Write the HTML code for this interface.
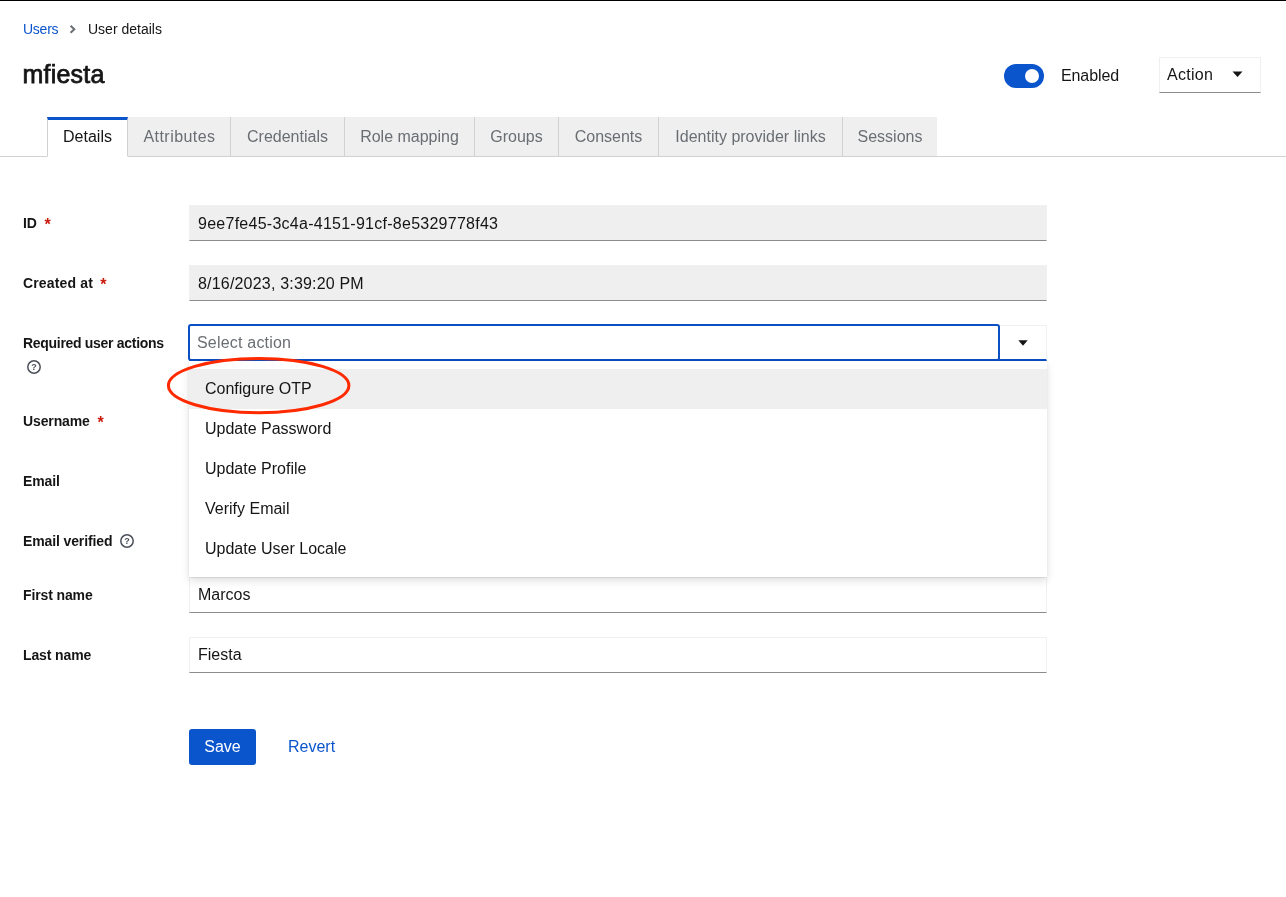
<!DOCTYPE html>
<html lang="en">
<head>
<meta charset="utf-8">
<title>User details</title>
<style>
*{box-sizing:border-box;margin:0;padding:0}
html,body{width:1286px;height:897px;background:#fff;overflow:hidden}
body{font-family:"Liberation Sans",sans-serif;font-size:16px;color:#151515;position:relative}
.abs{position:absolute;white-space:nowrap}
.topline{left:0;top:0;width:1286px;height:1px;background:#000}
.bc{top:21px;font-size:14px;line-height:16px}
.bc a{color:#0b55cc;text-decoration:none}
h1{position:absolute;left:22.4px;top:59px;font-size:25px;line-height:31px;font-weight:normal;-webkit-text-stroke:0.75px #151515;letter-spacing:0.25px;white-space:nowrap}
.tabsline{left:0;top:156px;width:1286px;height:1px;background:#d2d2d2}
.tabs{left:47px;top:117px;height:40px;display:flex}
.tab{height:40px;background:#efefef;border-right:1px solid #d2d2d2;border-bottom:1px solid #d2d2d2;color:#6a6e73;line-height:39px;text-align:center;font-size:16px}
.tab.first{background:#fff;color:#151515;border-top:3px solid #0b55cc;border-left:1px solid #d2d2d2;border-bottom:1px solid #fff;line-height:33px}
.tab.last{border-right:none}
.lbl{left:23px;font-size:14px;font-weight:bold;line-height:21px;letter-spacing:-0.12px}
.req{color:#c9190b;margin-left:7.7px;font-weight:bold;font-size:16px;line-height:0;position:relative;top:2px}
.inp{left:189px;width:858px;height:36px;border:1px solid #f0f0f0;border-bottom:1px solid #8a8d90;background:#fff;font-size:16px;line-height:34px;padding-left:8px}
.inp.ro{background:#efefef;padding-top:1px}
.menu{left:189px;top:361px;width:858px;height:216px;background:#fff;box-shadow:0 4px 8px 0 rgba(3,3,3,.12),0 0 4px 0 rgba(3,3,3,.06);padding-top:8px}
.mi{height:40px;line-height:40px;padding-left:16px;font-size:16px}
.mi.hl{background:#efefef}
.help{width:14px;height:14px}
</style>
</head>
<body>
<div id="root" style="position:absolute;left:0;top:0;width:1286px;height:897px;will-change:transform">
<div class="abs topline"></div>
<div class="abs bc" style="left:23px"><a style="letter-spacing:-0.25px">Users</a></div>
<svg class="abs" style="left:68px;top:24px" width="9" height="11" viewBox="0 0 9 11"><path d="M2.6 1.8 L6.3 5.3 L2.6 8.8" fill="none" stroke="#6a6e73" stroke-width="2"/></svg>
<div class="abs bc" style="left:88px">User details</div>
<h1>mfiesta</h1>

<div class="abs" style="left:1004px;top:64px;width:40px;height:24px;border-radius:12px;background:#0b55cc"></div>
<div class="abs" style="left:1024.7px;top:68.7px;width:14.5px;height:14.5px;border-radius:50%;background:#fff"></div>
<div class="abs" style="left:1061px;top:64px;line-height:24px;font-size:16px;letter-spacing:-0.1px">Enabled</div>
<div class="abs" style="left:1159px;top:57px;width:102px;height:36px;border:1px solid #f0f0f0;border-bottom:1px solid #8a8d90;padding-left:7px;line-height:34px;letter-spacing:0.3px;font-size:16px">Action</div>
<svg class="abs" style="left:1231.7px;top:71.4px" width="11" height="7" viewBox="0 0 11 7"><path d="M0.5 0.5 H10.5 L5.5 6 Z" fill="#151515"/></svg>

<div class="abs tabsline"></div>
<div class="abs tabs">
<div class="tab first" style="width:81px">Details</div>
<div class="tab" style="width:103px;letter-spacing:0.45px;padding-left:1px">Attributes</div>
<div class="tab" style="width:114px">Credentials</div>
<div class="tab" style="width:130px">Role mapping</div>
<div class="tab" style="width:84px">Groups</div>
<div class="tab" style="width:100px">Consents</div>
<div class="tab" style="width:184px">Identity provider links</div>
<div class="tab last" style="width:94px">Sessions</div>
</div>

<div class="abs lbl" style="top:213px">ID<span class="req">*</span></div>
<div class="abs inp ro" style="top:205px;letter-spacing:0.26px">9ee7fe45-3c4a-4151-91cf-8e5329778f43</div>

<div class="abs lbl" style="top:273px;letter-spacing:0.15px">Created at<span class="req" style="margin-left:7.2px">*</span></div>
<div class="abs inp ro" style="top:265px;letter-spacing:0.19px">8/16/2023, 3:39:20 PM</div>

<div class="abs lbl" style="top:333px;letter-spacing:-0.3px">Required user actions</div>
<svg class="abs help" style="left:27px;top:360px" viewBox="0 0 14 14"><circle cx="7" cy="7" r="6.2" fill="none" stroke="#4b5058" stroke-width="1.5"/><text x="7" y="10.2" font-size="9" font-weight="bold" text-anchor="middle" font-family="Liberation Sans, sans-serif" fill="#4b5058">?</text></svg>
<div class="abs" style="left:189px;top:325px;width:858px;height:36px;border:1px solid #f0f0f0;border-bottom:2px solid #0b4fc4;background:#fff"></div>
<div class="abs" style="left:188px;top:324px;width:812px;height:37px;border:2px solid #0b4fc4;border-radius:3px;background:#fff;color:#6a6e73;padding-left:7px;line-height:32px;padding-top:1px;letter-spacing:0.2px;font-size:16px">Select action</div>
<svg class="abs" style="left:1018px;top:340px" width="10" height="6" viewBox="0 0 10 6"><path d="M0.3 0.3 H9.7 L5 5.7 Z" fill="#151515"/></svg>

<div class="abs lbl" style="top:411px">Username<span class="req">*</span></div>
<div class="abs lbl" style="top:471px">Email</div>
<div class="abs lbl" style="top:531px">Email verified</div>
<svg class="abs help" style="left:120px;top:534px" viewBox="0 0 14 14"><circle cx="7" cy="7" r="6.2" fill="none" stroke="#4b5058" stroke-width="1.5"/><text x="7" y="10.2" font-size="9" font-weight="bold" text-anchor="middle" font-family="Liberation Sans, sans-serif" fill="#4b5058">?</text></svg>

<div class="abs lbl" style="top:585px">First name</div>
<div class="abs inp" style="top:577px">Marcos</div>
<div class="abs lbl" style="top:645px">Last name</div>
<div class="abs inp" style="top:637px">Fiesta</div>

<div class="abs menu">
<div class="mi hl">Configure OTP</div>
<div class="mi">Update Password</div>
<div class="mi">Update Profile</div>
<div class="mi">Verify Email</div>
<div class="mi">Update User Locale</div>
</div>
<svg class="abs" style="left:160px;top:350px" width="200" height="70" viewBox="0 0 200 70"><ellipse cx="98.65" cy="35.55" rx="90.25" ry="27.15" fill="none" stroke="#ff2a00" stroke-width="3"/></svg>

<div class="abs" style="left:189px;top:729px;width:67px;height:36px;border-radius:3px;background:#0b55cc;color:#fff;text-align:center;line-height:35px;font-size:16px">Save</div>
<div class="abs" style="left:288px;top:729px;line-height:35px;font-size:16px;color:#0b55cc">Revert</div>
</div>
</body>
</html>
